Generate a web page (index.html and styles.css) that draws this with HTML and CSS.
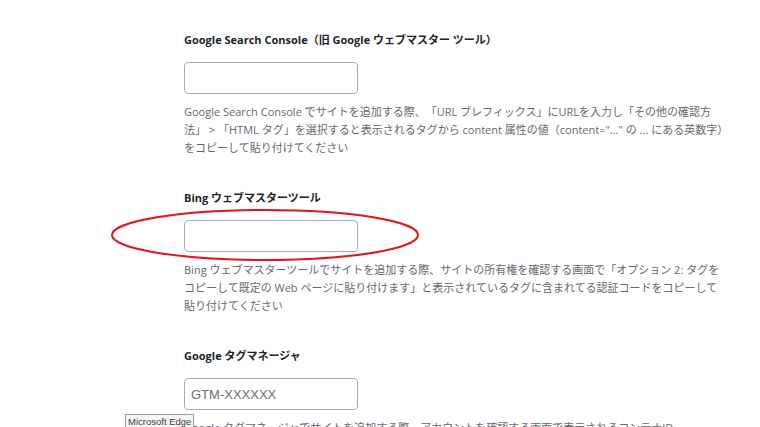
FILE: index.html
```html
<!DOCTYPE html>
<html lang="ja">
<head>
<meta charset="utf-8">
<title>Settings</title>
<link rel="stylesheet" href="styles.css">
</head>
<body>
<main class="settings">
  <section class="field">
    <h3 class="field-label">Google Search Console（旧 Google ウェブマスター ツール）</h3>
    <input class="field-input" type="text">
    <p class="field-desc">Google Search Console でサイトを追加する際、「URL プレフィックス」にURLを入力し「その他の確認方法」 > 「HTML タグ」を選択すると表示されるタグから content 属性の値（content="..." の ... にある英数字）をコピーして貼り付けてください</p>
  </section>
  <section class="field">
    <h3 class="field-label">Bing ウェブマスターツール</h3>
    <input class="field-input" type="text">
    <p class="field-desc field-desc-compact">Bing ウェブマスターツールでサイトを追加する際、サイトの所有権を確認する画面で「オプション 2: タグをコピーして既定の Web ページに貼り付けます」と表示されているタグに含まれてる認証コードをコピーして貼り付けてください</p>
  </section>
  <section class="field">
    <h3 class="field-label">Google タグマネージャ</h3>
    <input class="field-input" type="text" placeholder="GTM-XXXXXX">
    <p class="field-desc">Google タグマネージャでサイトを追加する際、アカウントを確認する画面で表示されるコンテナID <span class="nowrap">(GTM-XXXXXX)</span> を入力してください</p>
  </section>
</main>
<svg class="annotation" width="312" height="56" viewBox="0 0 312 56">
  <ellipse cx="156" cy="28" rx="153" ry="25" fill="none" stroke="#e3141b" stroke-width="2"/>
</svg>
<div class="tooltip">Microsoft Edge</div>
</body>
</html>
```

FILE: styles.css
```css
html, body {
  margin: 0;
  padding: 0;
  background: #ffffff;
  overflow: hidden;
}

body {
  font-family: "Open Sans", "Noto Sans CJK JP", sans-serif;
  font-size: 11px;
  color: #1d2327;
  height: 427px;
  text-spacing-trim: space-all;
}

.settings {
  display: flex;
  flex-direction: column;
  gap: 32px;
  padding: 31px 0 0 184px;
  width: 545px;
}

.field {
  display: flex;
  flex-direction: column;
  align-items: flex-start;
}

.field-label {
  margin: 0 0 13px;
  font-size: 11px;
  font-weight: bold;
  line-height: 18px;
  color: #1d2327;
}

.field-input {
  box-sizing: border-box;
  width: 174px;
  height: 32px;
  margin: 0;
  padding: 0 6px;
  border: 1px solid #a9aeb3;
  border-radius: 4px;
  background: #ffffff;
  font-family: "Liberation Sans", sans-serif;
  font-size: 13px;
  color: #2c3338;
}

.field-input::placeholder {
  color: #6b7075;
}

.field-desc {
  margin: 9px 0 0;
  line-height: 18px;
  color: #646970;
}

.field-desc-compact {
  max-width: 541px;
}

.nowrap {
  white-space: nowrap;
}

.annotation {
  position: absolute;
  left: 109px;
  top: 207px;
}

.tooltip {
  position: absolute;
  left: 125px;
  top: 414px;
  padding: 0 2px;
  border: 1px solid #9a9a9a;
  background: #f6f6f6;
  font-family: "Liberation Sans", sans-serif;
  font-size: 9.5px;
  line-height: 13px;
  color: #3c3c3c;
}
```
